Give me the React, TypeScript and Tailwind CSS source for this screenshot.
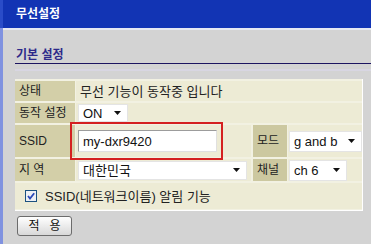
import React from "react";

const font = { fontFamily: '"Liberation Sans", "Noto Sans CJK KR", sans-serif' };

function Arrow() {
  return (
    <svg width="7" height="4" viewBox="0 0 7 4" className="shrink-0">
      <path d="M0 0 H7 L3.5 4 Z" fill="#111" />
    </svg>
  );
}

function Select({ text, w, h }: { text: string; w: string; h: string }) {
  return (
    <div className={`flex items-center justify-between bg-white border border-[#e4e4e4] pl-[4px] pr-[6px] ${w} ${h}`}>
      <span className="text-[13px] leading-none text-[#111]">{text}</span>
      <Arrow />
    </div>
  );
}

function Label({ children, w = "w-[60px]", bg = "bg-[#d3cfa8]" }: { children: React.ReactNode; w?: string; bg?: string }) {
  return (
    <div className={`${w} ${bg} shrink-0 flex items-center pl-[4px] text-[12px] leading-none text-[#222]`}>
      {children}
    </div>
  );
}

export default function App() {
  return (
    <div className="w-[371px] h-[244px] bg-[#d3d3d3] flex overflow-hidden relative" style={font}>
      <div className="w-[3px] flex flex-col">
        <div className="h-[28px] bg-[#2a4cc8]" />
        <div className="flex-1 bg-[#8092e0]" />
      </div>
      <div className="flex-1 flex flex-col">
        <div className="h-[28px] bg-[#1234b4] flex items-center pl-[13px]">
          <span className="text-white text-[12px] font-bold leading-none">무선설정</span>
        </div>
        <div className="h-[2px] bg-[#e6e8f2]" />
        <div className="pl-[12px] flex flex-col">
          <div className="mt-[17px] h-[17px] border-b border-[#1c1460] flex items-center pl-[1px]">
            <span className="text-[12px] font-bold leading-none text-[#2d2a8a]">기본 설정</span>
          </div>
          <div className="mt-[5px] h-[2px] bg-[#d8d6e2]" />
          <div className="mt-[8px] w-[348px] bg-[#f2f1e2] border-r border-b border-white pt-[2px] pb-[1px] flex flex-col gap-[2px]">
            <div className="flex h-[20px] gap-[1px]">
              <Label>상태</Label>
              <div className="flex-1 bg-[#edebd5] flex items-center pl-[4px] text-[13px] leading-none text-[#222]">
                무선 기능이 동작중 입니다
              </div>
            </div>
            <div className="flex h-[20px] gap-[1px]">
              <Label>동작 설정</Label>
              <div className="flex-1 bg-[#edebd5] flex items-center pl-[2px]">
                <Select text="ON" w="w-[50px]" h="h-[18px]" />
              </div>
            </div>
            <div className="flex h-[32px] gap-[1px]">
              <Label>SSID</Label>
              <div className="w-[175px] bg-[#edebd5] flex items-center pl-[2px]">
                <div className="w-[139px] h-[22px] bg-white border border-[#9c9c9c] border-r-[#e0e0e0] border-b-[#e0e0e0] flex items-center pl-[4px]">
                  <span className="text-[13px] leading-none text-[#111]">my-dxr9420</span>
                </div>
              </div>
              <Label w="w-[34px] ml-[1px]" bg="bg-[#ccc8a0]">모드</Label>
              <div className="flex-1 bg-[#edebd5] flex items-center pl-[1px]">
                <Select text="g and b" w="w-[73px]" h="h-[21px]" />
              </div>
            </div>
            <div className="flex h-[22px] gap-[1px]">
              <Label>지 역</Label>
              <div className="w-[175px] bg-[#edebd5] flex items-center pl-[2px]">
                <Select text="대한민국" w="w-[169px]" h="h-[19px]" />
              </div>
              <Label w="w-[34px] ml-[1px]" bg="bg-[#ccc8a0]">채널</Label>
              <div className="flex-1 bg-[#edebd5] flex items-center pl-[1px]">
                <Select text="ch 6" w="w-[58px]" h="h-[21px]" />
              </div>
            </div>
            <div className="flex h-[26px] items-center bg-[#edebd5] pl-[10px] gap-[8px]">
              <svg width="12" height="12" viewBox="0 0 12 12">
                <rect x="0.5" y="0.5" width="11" height="11" fill="#eef0f4" stroke="#1c5180" />
                <path d="M3 6 L5 8.5 L9.2 3.2" fill="none" stroke="#2a48b8" strokeWidth="1.8" />
              </svg>
              <span className="text-[13px] leading-none text-[#222]">SSID(네트워크이름) 알림 기능</span>
            </div>
          </div>
          <div className="mt-[5px] ml-[2px] w-[55px] h-[20px] rounded-[3px] border border-[#6c6c6c] bg-gradient-to-b from-white to-[#d8d8d8] flex items-center justify-center">
            <span className="text-[12px] leading-none text-[#111] tracking-[10px] pl-[10px]">적용</span>
          </div>
        </div>
      </div>
      <div className="absolute left-[70px] top-[122px] w-[153px] h-[38px] border-2 border-[#d42020]" />
    </div>
  );
}
